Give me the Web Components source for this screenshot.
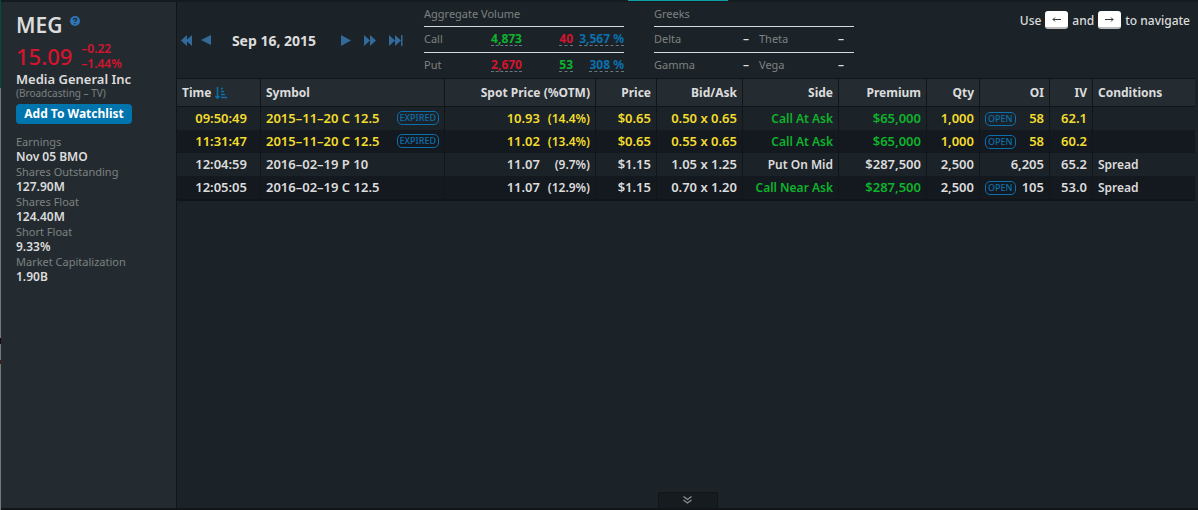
<!DOCTYPE html>
<html lang="en">
<head>
<meta charset="utf-8">
<title>MEG Option Trades</title>
<style>
html, body { margin: 0; }
body { background: #1c2328; color: #dcdcdc; font: 600 13px/15px "Noto Sans", "Open Sans", sans-serif; }
</style>
</head>
<body>
<trade-app></trade-app>

<script>
const define = (name, html, setup) => {
  const template = document.createElement('template');
  template.innerHTML = html;
  customElements.define(name, class extends HTMLElement {
    constructor() {
      super();
      this.attachShadow({ mode: 'open' }).append(template.content.cloneNode(true));
    }
    connectedCallback() { if (setup) setup(this, this.shadowRoot); }
  });
};

define('tag-badge', `
<style>
:host { display: inline-block; box-sizing: border-box; height: 14px; padding: 0 2px; border: 1px solid #0b70ad; border-radius: 5px; color: #0b70ad; font-size: 9px; font-weight: 500; line-height: 12px; }
</style><slot></slot>`);

define('stat-item', `
<style>
:host { display: block; }
dt { color: #7d8181; font-size: 11px; font-weight: 400; }
dd { margin: 0; font-size: 12px; }
dl { margin: 0; }
</style><dl><dt><slot name="label"></slot></dt><dd><slot></slot></dd></dl>`);

define('stock-summary', `
<style>
:host { display: block; box-sizing: border-box; background: #242b30; border-right: 1px solid #121517; padding: 10px 15px; }
header { display: flex; gap: 8px; }
h1 { margin: 0; font-size: 21px; line-height: 27px; height: 25px; font-weight: 600; }
.help { border: 0; padding: 0; background: none; width: 10px; height: 10px; margin-top: 4px; }
svg { display: block; }
.quote { display: flex; gap: 9px; margin-top: 4px; color: #d4142f; }
.price { font-size: 22px; line-height: 30px; font-weight: 500; }
.change { font-size: 12px; }
.name { margin-top: 1px; font-size: 13px; }
.sector { color: #7d8181; font-size: 10px; line-height: 13px; font-weight: 400; }
.watch { display: block; margin: 4px 0 10px; height: 20px; width: 116px; padding: 0; border: 0; border-radius: 4px; background: #0074ad; color: #fff; font: inherit; font-size: 12px; font-weight: 700; line-height: 20px; }
</style>
<header><h1>MEG</h1><button class="help" aria-label="Help"><svg width="10" height="10" viewBox="0 0 10 10"><circle cx="5" cy="5" r="5" fill="#2f75b5"/><path d="M3.4 3.8q0-1.5 1.6-1.5t1.6 1.3q0 .7-.8 1.1-.8.4-.8 1.1M5 7v1.2" fill="none" stroke="#242b30" stroke-width="1.3"/></svg></button></header>
<div class="quote"><span class="price">15.09</span><div class="change"><div>–0.22</div><div>–1.44%</div></div></div>
<div class="name">Media General Inc</div>
<div class="sector">(Broadcasting – TV)</div>
<button class="watch">Add To Watchlist</button>
<stat-item><span slot="label">Earnings</span>Nov 05 BMO</stat-item>
<stat-item><span slot="label">Shares Outstanding</span>127.90M</stat-item>
<stat-item><span slot="label">Shares Float</span>124.40M</stat-item>
<stat-item><span slot="label">Short Float</span>9.33%</stat-item>
<stat-item><span slot="label">Market Capitalization</span>1.90B</stat-item>`);

define('date-nav', `
<style>
:host { display: flex; align-items: center; height: 76px; }
button { border: 0; padding: 0; background: none; color: #336a9c; }
svg { display: block; fill: currentColor; }
.prev { margin-left: 9px; }
time { width: 88px; margin: 0 23px 0 19px; text-align: center; font-size: 14px; font-weight: 700; white-space: nowrap; }
.step { margin-left: 13px; }
</style>
<button aria-label="First day"><svg width="11" height="11" viewBox="0 0 11 11"><path d="M6 0v11L0 5.500z M11 0v11L5 5.500z"/></svg></button>
<button class="prev" aria-label="Previous day"><svg width="10" height="10" viewBox="0 0 10 10"><path d="M10 0v10L0 5z"/></svg></button>
<time datetime="2015-09-16">Sep 16, 2015</time>
<button aria-label="Next day"><svg width="10" height="11" viewBox="0 0 10 11"><path d="M0 0v11L10 5.500z"/></svg></button>
<button class="step" aria-label="Forward"><svg width="12" height="11" viewBox="0 0 12 11"><path d="M0 0v11L6 5.500z M6 0v11L12 5.500z"/></svg></button>
<button class="step" aria-label="Latest day"><svg width="14" height="11" viewBox="0 0 14 11"><path d="M0 0v11L6 5.500z M6 0v11L12 5.500z M12 0h1.500v11h-1.500z"/></svg></button>`);

const miniTable = `
:host { display: block; width: 200px; }
table { width: 100%; table-layout: fixed; border-collapse: separate; border-spacing: 0; font-size: 12px; }
caption { height: 24px; line-height: 24px; text-align: left; color: #7d8181; font-size: 11px; font-weight: 400; }
th, td { box-sizing: border-box; height: 26px; padding: 0 0 2px; border-top: 1px solid #d8dada; line-height: 14px; text-align: right; white-space: nowrap; }
th { color: #7d8181; font-size: 11px; font-weight: 400; text-align: left; }`;

define('volume-table', `
<style>${miniTable}
td { font-weight: 700; }
td span { display: inline-block; height: 13px; border-bottom: 1px dashed #69767e; }
.up { color: #0db32c; } .down { color: #d4142f; } .pct { color: #0b70ad; }
</style>
<table><caption>Aggregate Volume</caption>
<colgroup><col style="width:40px"><col style="width:58px"><col><col style="width:51px"></colgroup>
<tr><th scope="row">Call</th><td class="up"><span>4,873</span></td><td class="down"><span>40</span></td><td class="pct"><span>3,567 %</span></td></tr>
<tr><th scope="row">Put</th><td class="down"><span>2,670</span></td><td class="up"><span>53</span></td><td class="pct"><span>308 %</span></td></tr>
</table>`);

define('greeks-table', `
<style>${miniTable}
td { padding-right: 10px; }
</style>
<table><caption>Greeks</caption>
<colgroup><col style="width:50px"><col style="width:55px"><col style="width:50px"><col></colgroup>
<tr><th scope="row">Delta</th><td>–</td><th scope="row">Theta</th><td>–</td></tr>
<tr><th scope="row">Gamma</th><td>–</td><th scope="row">Vega</th><td>–</td></tr>
</table>`);

define('key-hint', `
<style>
:host { display: flex; align-items: center; gap: 4px; font-size: 12px; font-weight: 500; }
kbd { box-sizing: border-box; width: 23px; height: 18px; border-radius: 3px; background: #fff; border-bottom: 2px solid #bbb; display: flex; align-items: center; justify-content: center; }
</style>
<span>Use</span><kbd aria-label="Left arrow"><svg width="9" height="7" viewBox="0 0 9 7" fill="none" stroke="#333"><path d="M1 3.500h8M3 1.500L1 3.500l2 2"/></svg></kbd><span>and</span><kbd aria-label="Right arrow"><svg width="9" height="7" viewBox="0 0 9 7" fill="none" stroke="#333"><path d="M0 3.500h8M6 1.500l2 2-2 2"/></svg></kbd><span>to navigate</span>`);

const trades = [
  ['09:50:49', '2015–11–20 C 12.5', 1, '10.93', '(14.4%)', '$0.65', '0.50 x 0.65', 'Call At Ask', '$65,000', '1,000', 1, '58', '62.1', '', 'hot call'],
  ['11:31:47', '2015–11–20 C 12.5', 1, '11.02', '(13.4%)', '$0.65', '0.55 x 0.65', 'Call At Ask', '$65,000', '1,000', 1, '58', '60.2', '', 'hot call'],
  ['12:04:59', '2016–02–19 P 10', 0, '11.07', '(9.7%)', '$1.15', '1.05 x 1.25', 'Put On Mid', '$287,500', '2,500', 0, '6,205', '65.2', 'Spread', ''],
  ['12:05:05', '2016–02–19 C 12.5', 0, '11.07', '(12.9%)', '$1.15', '0.70 x 1.20', 'Call Near Ask', '$287,500', '2,500', 1, '105', '53.0', 'Spread', 'call'],
];

define('trades-table', `
<style>
:host { display: block; }
table { width: 100%; table-layout: fixed; border-collapse: separate; border-spacing: 0; border-bottom: 2px solid #121517; }
th, td { box-sizing: border-box; padding: 0 5px; border-right: 1px solid #121517; text-align: right; white-space: nowrap; }
th:last-child, td:last-child { border-right: 0; }
th { height: 29px; background: #242c32; border-top: 1px solid #121517; border-bottom: 1px solid #121517; font-size: 12px; font-weight: 700; }
td { height: 23px; font-size: 13px; font-weight: 600; }
td:first-child { padding-right: 13px; }
th.left, td.left { text-align: left; }
tr:nth-child(even) td { background: #14191f; }
.hot { color: #f2dc2d; }
.call .flow { color: #0db32c; }
td.words, .otm { font-size: 12px; }
.pair { display: flex; justify-content: space-between; align-items: center; }
.left tag-badge { margin-bottom: 2px; }
.otm { display: inline-block; width: 50px; }
.sort { border: 0; padding: 0; background: none; color: inherit; font: inherit; display: flex; align-items: center; gap: 4px; }
</style>
<table>
<colgroup><col style="width:84px"><col style="width:184px"><col style="width:151px"><col style="width:61px"><col style="width:86px"><col style="width:96px"><col style="width:88px"><col style="width:53px"><col style="width:70px"><col style="width:43px"><col></colgroup>
<thead><tr><th class="left" scope="col"><button class="sort">Time<svg width="12" height="12" viewBox="0 0 12 12" fill="none" stroke="#0b70ad"><path d="M2.500 0v11M.5 9l2 2.200 2-2.200M6 1.500h2M6 4.500h3M6 7.500h4M6 10.500h6" stroke-width="1.500"/></svg></button></th><th class="left" scope="col">Symbol</th><th scope="col">Spot Price (%OTM)</th><th scope="col">Price</th><th scope="col">Bid/Ask</th><th scope="col">Side</th><th scope="col">Premium</th><th scope="col">Qty</th><th scope="col">OI</th><th scope="col">IV</th><th class="left" scope="col">Conditions</th></tr></thead>
<tbody></tbody></table>`, (host, root) => {
  root.querySelector('tbody').innerHTML = trades.map(([time, symbol, expired, spot, otm, price, bid, side, premium, qty, open, oi, iv, cond, cls]) => `
<tr class="${cls}"><td>${time}</td><td class="left"><div class="pair"><span>${symbol}</span>${expired ? '<tag-badge>EXPIRED</tag-badge>' : ''}</div></td><td>${spot}<span class="otm">${otm}</span></td><td>${price}</td><td>${bid}</td><td class="flow words">${side}</td><td class="flow">${premium}</td><td>${qty}</td><td><div class="pair">${open ? '<tag-badge>OPEN</tag-badge>' : '<span></span>'}<span>${oi}</span></div></td><td>${iv}</td><td class="left words">${cond}</td></tr>`).join('');
});

define('drawer-toggle', `
<style>
:host { display: block; }
button { display: flex; justify-content: center; width: 60px; height: 16px; padding: 3px 0 0; border: 1px solid #121517; border-bottom: 0; border-radius: 3px 3px 0 0; background: #161b20; box-sizing: border-box; }
</style>
<button aria-label="Expand drawer"><svg width="9" height="8" viewBox="0 0 9 8" fill="none" stroke="#8b8f8d" stroke-width="1.300"><path d="M.5.5l4 3 4-3M.5 4l4 3 4-3"/></svg></button>`);

define('trade-app', `
<style>
:host { display: grid; grid-template: 2px 1fr 2px / 1px 176px minmax(0, 1fr); min-height: 100vh; }
.edge { grid-row: 1 / 4; background: linear-gradient(#064a3a 88px, #777 88px 338px, #1a0510 338px 344px, #777 344px 360px, #4a1a10 360px 364px, #777 364px); }
.top { grid-column: 2 / 4; background: #151a1f; }
.marker { width: 100px; height: 1px; margin-left: 627px; background: #10a0ac; }
main { display: flex; flex-direction: column; }
.bar { display: flex; height: 76px; padding: 0 8px 0 4px; }
volume-table { margin-left: 21px; }
greeks-table { margin-left: 30px; }
key-hint { margin: 9px 0 auto auto; }
trades-table { margin-right: 3px; }
drawer-toggle { margin: auto auto 0; }
.bottom { grid-column: 2 / 4; background: #121517; }
</style>
<div class="edge"></div>
<div class="top"><div class="marker"></div></div>
<stock-summary></stock-summary>
<main>
<div class="bar"><date-nav></date-nav><volume-table></volume-table><greeks-table></greeks-table><key-hint></key-hint></div>
<trades-table></trades-table>
<drawer-toggle></drawer-toggle>
</main>
<div class="bottom"></div>`);
</script>
</body>
</html>
